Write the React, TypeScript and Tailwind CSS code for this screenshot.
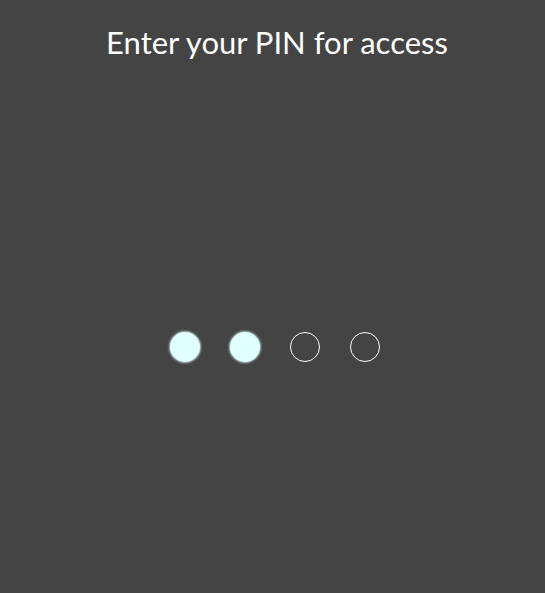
import { useState } from "react";

const PIN_LENGTH = 4;

export default function App() {
  const [pin] = useState("12");

  return (
    <div className="min-h-[593px] w-full bg-[#444444] flex flex-col items-center font-['Lato',sans-serif]">
      <h1 className="mt-[21px] ml-[9px] text-[31px] leading-[42px] text-white">
        Enter your PIN for access
      </h1>

      {/* Pin dots */}
      <div className="mt-[269px] ml-[5px] flex gap-[30px]">
        {Array.from({ length: PIN_LENGTH }, (_, i) => i).map((i) =>
          i < pin.length ? (
            <div
              key={i}
              className="w-[30px] h-[30px] rounded-full bg-[#e0ffff] shadow-[0_0_2px_1px_rgba(224,255,255,0.7)]"
            />
          ) : (
            <div
              key={i}
              className="w-[30px] h-[30px] rounded-full border border-white"
            />
          )
        )}
      </div>
    </div>
  );
}
